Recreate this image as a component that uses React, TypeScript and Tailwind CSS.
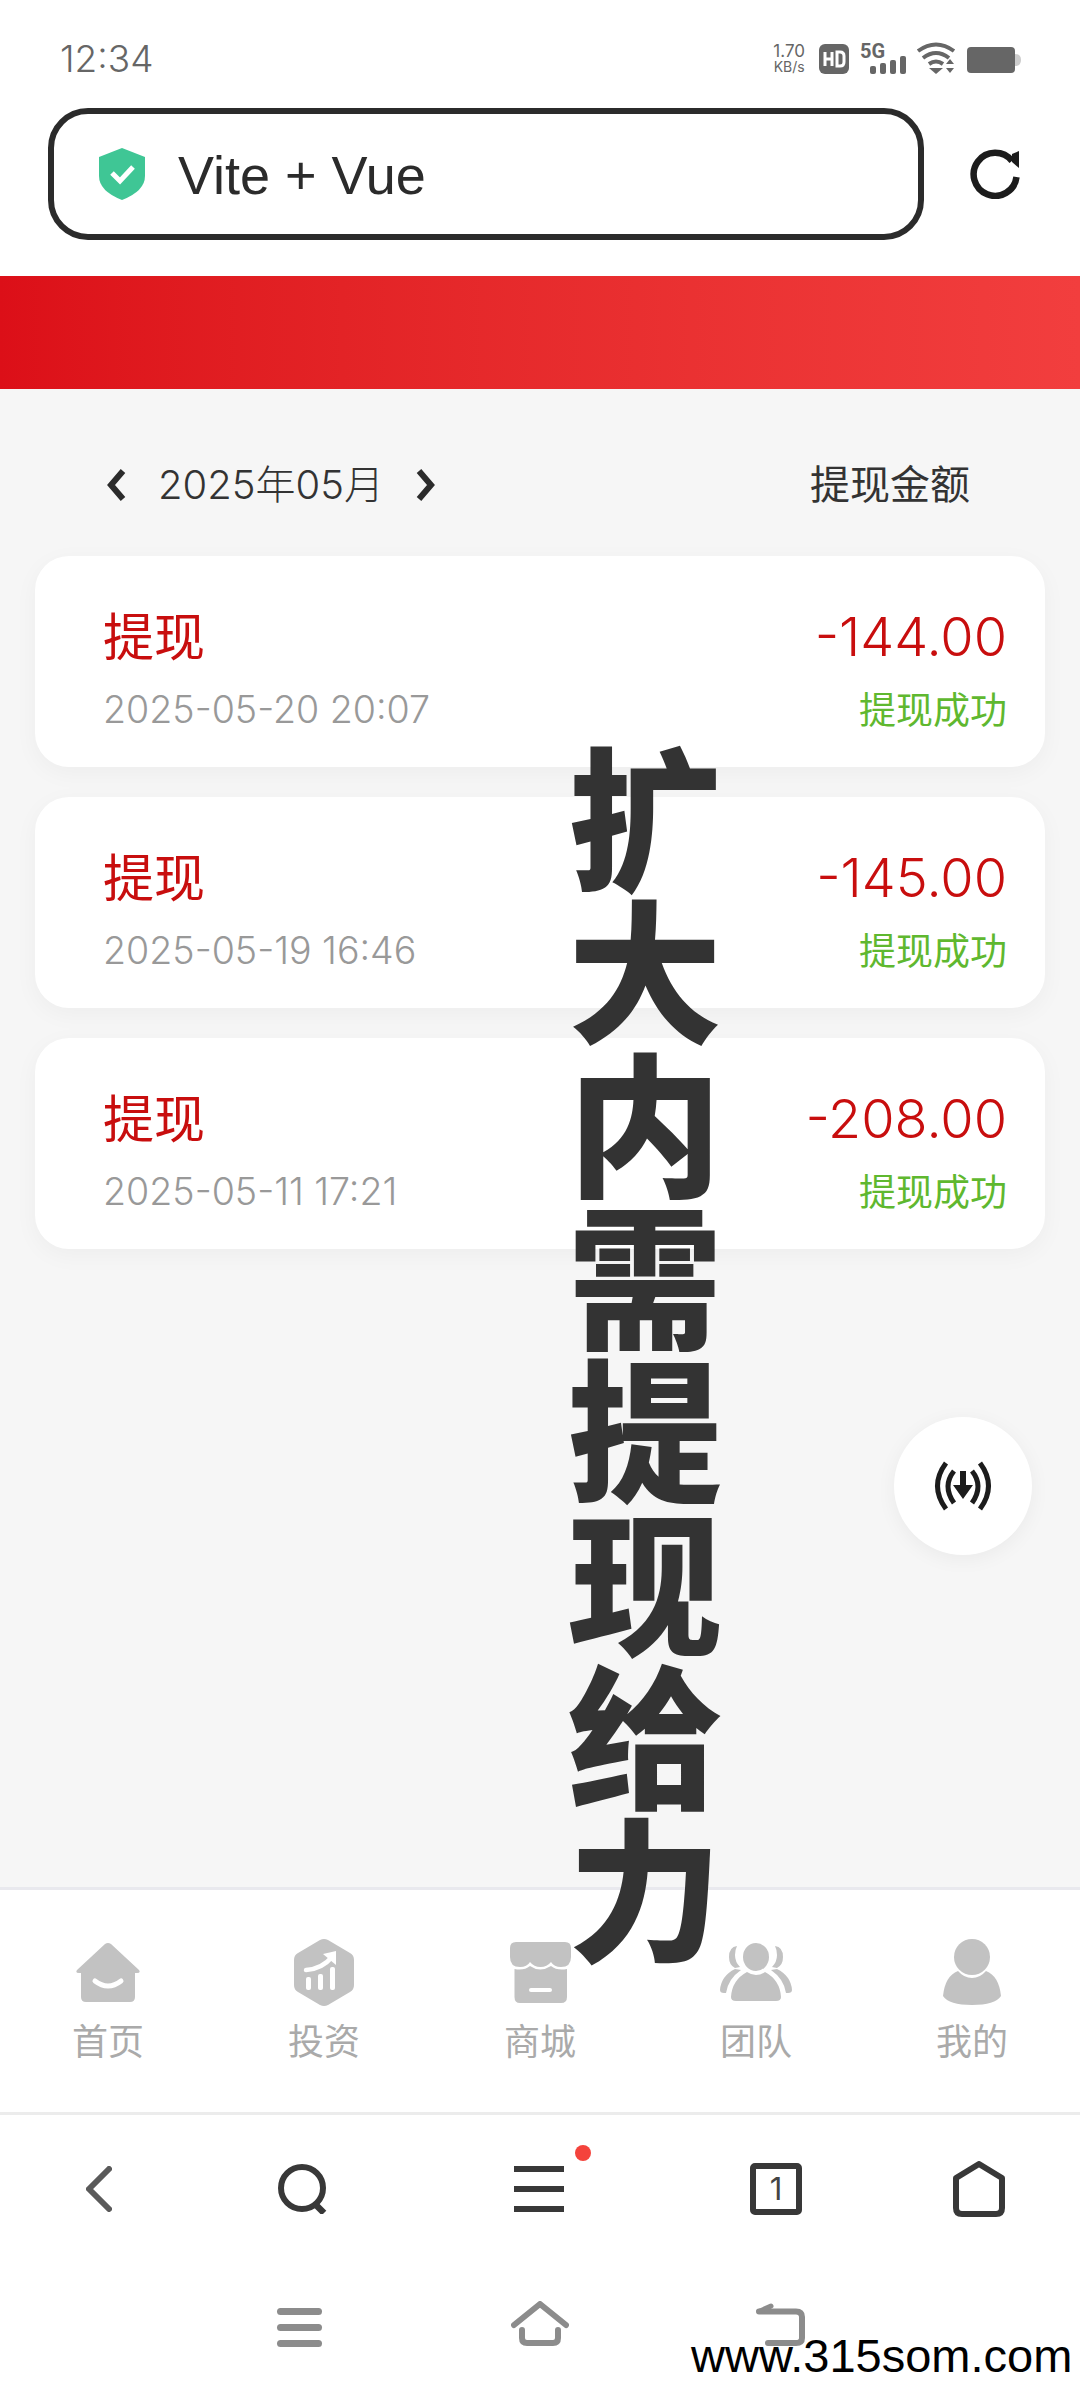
import React from 'react';

const FONT = "font-['Inter','Noto_Sans_CJK_SC',sans-serif]";

interface Record {
  time: string;
  amount: string;
}

const records: Record[] = [
  { time: '2025-05-20 20:07', amount: '-144.00' },
  { time: '2025-05-19 16:46', amount: '-145.00' },
  { time: '2025-05-11 17:21', amount: '-208.00' },
];

const HomeIcon = () => (
  <svg viewBox="0 0 64 59" className="w-[64px] h-[59px]" fill="#c2c2c2">
    <path d="M29 1 Q32 -1 35 1 L63 27 Q65 30 61 30 L59 30 L59 54 Q59 59 54 59 L10 59 Q5 59 5 54 L5 30 L3 30 Q-1 30 1 27 Z" />
    <path d="M19 38 Q32 48 45 38" stroke="#fff" strokeWidth="5" strokeLinecap="round" fill="none" />
  </svg>
);

const InvestIcon = () => (
  <svg viewBox="0 0 60 67" className="w-[60px] h-[67px]" fill="#c2c2c2">
    <path d="M26 1 Q30 -1 34 1 L56 14 Q60 16 60 21 L60 46 Q60 51 56 53 L34 66 Q30 68 26 66 L4 53 Q0 51 0 46 L0 21 Q0 16 4 14 Z" />
    <g fill="#fff">
      <rect x="12" y="38" width="5" height="13" rx="2" />
      <rect x="24" y="35" width="5" height="16" rx="2" />
      <rect x="36" y="28" width="5" height="23" rx="2" />
    </g>
    <path d="M12 31 Q28 30 38 18" stroke="#fff" strokeWidth="4.500" strokeLinecap="round" fill="none" />
    <path d="M29 15 L42 12 L42 26 Z" fill="#fff" />
  </svg>
);

const ShopIcon = () => (
  <svg viewBox="0 0 61 61" className="w-[61px] h-[61px]" fill="#c2c2c2">
    <path d="M6 0 H55 Q61 0 61 6 V15 Q61 25 51 25 Q44 25 41 20 Q37 25 30.500 25 Q24 25 20 20 Q17 25 10 25 Q0 25 0 15 V6 Q0 0 6 0 Z" />
    <path d="M4.500 27 Q14 29 20 24 Q30 31 41 24 Q47 29 57 27 V55 Q57 61 51 61 H10 Q4.500 61 4.500 55 Z" />
    <rect x="19" y="46" width="23" height="4" rx="2" fill="#fff" />
  </svg>
);

const TeamIcon = () => (
  <svg viewBox="0 0 72 58" className="w-[72px] h-[58px]" fill="#c2c2c2">
    <ellipse cx="36" cy="14" rx="13" ry="14" />
    <path d="M11 54 Q12 37 27 29 Q36 35 45 29 Q60 37 61 54 Q61 58 56 58 L16 58 Q11 58 11 54 Z" />
    <path d="M17 3 Q9 4 9 14 Q9 22 15 25 L20 24 Q15 19 15 12 Q15 7 17 3 Z" />
    <path d="M55 3 Q63 4 63 14 Q63 22 57 25 L52 24 Q57 19 57 12 Q57 7 55 3 Z" />
    <path d="M15 26 Q1 33 0 47 Q0 50 4 50 L6 50 Q8 36 21 27 Z" />
    <path d="M57 26 Q71 33 72 47 Q72 50 68 50 L66 50 Q64 36 51 27 Z" />
  </svg>
);

const MeIcon = () => (
  <svg viewBox="0 0 58 66" className="w-[58px] h-[66px]" fill="#c2c2c2">
    <circle cx="29" cy="18" r="18" />
    <path d="M15 32 Q21 39 29 39 Q37 39 43 32 Q56 37 58 57 Q52 66 29 66 Q6 66 0 57 Q2 37 15 32 Z" />
  </svg>
);

const tabs = [
  { label: '首页', icon: <HomeIcon /> },
  { label: '投资', icon: <InvestIcon /> },
  { label: '商城', icon: <ShopIcon /> },
  { label: '团队', icon: <TeamIcon /> },
  { label: '我的', icon: <MeIcon /> },
];

const StatusBar = () => (
  <div className="h-[108px] shrink-0 flex items-center justify-between pl-[60px] pr-[59px] pt-[8px]">
    <span className="text-[37px] leading-none text-[#666] font-light">12:34</span>
    <div className="flex items-center">
      <div className="flex flex-col items-center text-[#666] leading-none mr-[12px]">
        <span className="text-[17px] leading-[17px]">1.70</span>
        <span className="text-[14px] leading-[14px]">KB/s</span>
      </div>
      <svg viewBox="0 0 204 32" className="w-[204px] h-[32px] overflow-visible">
        <rect x="2" y="2" width="30" height="30" rx="6" fill="#666" />
        <path d="M8 10v14M8 17h7M15 10v14M20 10v14h3q4 0 4-4v-6q0-4-4-4z" stroke="#fff" strokeWidth="3" fill="none" />
        <text x="43" y="16" fontFamily="Roboto" fontWeight="700" fontSize="20" fill="#666">5G</text>
        <rect x="53" y="24" width="6" height="8" rx="2" fill="#666" />
        <rect x="63" y="21" width="6" height="11" rx="2" fill="#666" />
        <rect x="73" y="18" width="6" height="14" rx="2" fill="#666" />
        <rect x="83" y="14" width="6" height="18" rx="2" fill="#666" />
        <path d="M101 9 Q119 -4 137 9" stroke="#666" strokeWidth="4" fill="none" />
        <path d="M106 16 Q119 6 132 16" stroke="#666" strokeWidth="4" fill="none" />
        <path d="M112 22 Q119 17 126 22" stroke="#666" strokeWidth="4" fill="none" />
        <path d="M112 26h14l-7 6z" fill="#666" />
        <path d="M129 22h8l-4-5zM129 26h8l-4 5z" fill="#666" />
        <rect x="150" y="5" width="48" height="26" rx="4" fill="#666" />
        <path d="M198 12 Q204 12 204 18 Q204 24 198 24 Z" fill="#ccc" />
      </svg>
    </div>
  </div>
);

const AddressBar = () => (
  <div className="h-[168px] shrink-0 flex items-start pl-[48px] pr-[60px]">
    <div className="w-[876px] h-[132px] border-[6px] border-[#2b2b2b] rounded-[40px] flex items-center pl-[44px]">
      <svg viewBox="0 0 48 52" className="w-[48px] h-[52px]">
        <path d="M24 0 L47 9 L47 28 Q47 43 24 52 Q1 43 1 28 L1 9 Z" fill="#3fc695" />
        <path d="M14 25 L22 33 L35 19" stroke="#fff" strokeWidth="5" fill="none" />
      </svg>
      <span className="ml-[32px] mt-[2px] text-[54px] leading-none text-[#2b2b2b] font-['Liberation_Sans']">Vite + Vue</span>
    </div>
    <svg viewBox="0 0 50 50" className="ml-[46px] mt-[41px] w-[50px] h-[50px]">
      <path d="M46.500 28 A21.500 21.500 0 1 1 42 12" stroke="#1c1c1c" strokeWidth="6.500" fill="none" />
      <path d="M49 2 V19 L42 13 V5 Z" fill="#1c1c1c" />
    </svg>
  </div>
);

const MonthRow = () => (
  <div className="h-[167px] flex items-center pl-[106px] pr-[110px] pt-[24px] text-[40px] text-[#333]">
    <svg viewBox="0 0 22 34" className="w-[22px] h-[34px]">
      <path d="M17 3 L5 17 L17 31" stroke="#2b2b2b" strokeWidth="6" fill="none" />
    </svg>
    <span className="ml-[30px] leading-none font-light">2025年05月</span>
    <svg viewBox="0 0 22 34" className="ml-[30px] w-[22px] h-[34px]">
      <path d="M5 3 L17 17 L5 31" stroke="#2b2b2b" strokeWidth="6" fill="none" />
    </svg>
    <span className="ml-auto leading-none">提现金额</span>
  </div>
);

const RecordCard: React.FC<{ record: Record }> = ({ record }) => (
  <div className="h-[211px] rounded-[34px] bg-white shadow-[0_6px_24px_rgba(0,0,0,0.04)] pl-[68px] pr-[38px] pt-[52px]">
    <div className="flex items-center justify-between h-[58px]">
      <span className="text-[51px] leading-none text-[#c80e0e]">提现</span>
      <span className="text-[54px] leading-none text-[#c80e0e] font-light">{record.amount}</span>
    </div>
    <div className="flex items-center justify-between mt-[22px] h-[44px]">
      <span className="text-[37.6px] leading-none text-[#999] font-light">{record.time}</span>
      <span className="text-[37px] leading-none text-[#5fb82f]">提现成功</span>
    </div>
  </div>
);

const BrowserBar = () => (
  <div className="h-[150px] shrink-0 border-t-[3px] border-[#ececec] flex items-center pl-[86px] text-[#333]">
    <svg viewBox="0 0 26 46" className="w-[26px] h-[46px]">
      <path d="M23 3 L3 23 L23 43" stroke="#5a5a5a" strokeWidth="6" strokeLinecap="round" strokeLinejoin="round" fill="none" />
    </svg>
    <svg viewBox="0 0 50 50" className="ml-[166px] w-[50px] h-[50px]">
      <circle cx="24" cy="24" r="21" stroke="#383838" strokeWidth="6" fill="none" />
      <path d="M37 40 L46 49" stroke="#383838" strokeWidth="6.500" />
    </svg>
    <div className="relative ml-[186px]">
      <div className="w-[50px] flex flex-col gap-[14px]">
        <div className="h-[6px] bg-[#383838]" />
        <div className="h-[6px] bg-[#383838]" />
        <div className="h-[6px] bg-[#383838]" />
      </div>
      <div className="absolute -top-[21px] -right-[27px] w-[16px] h-[16px] rounded-full bg-[#f4433c]" />
    </div>
    <div className="ml-[186px] w-[52px] h-[52px] rounded-[5px] border-[6px] border-[#383838] flex items-center justify-center text-[31px] leading-none text-[#444]">
      1
    </div>
    <svg viewBox="0 0 52 56" className="ml-[151px] w-[52px] h-[56px]">
      <path d="M26 3 L49 17 L49 47 Q49 53 43 53 L9 53 Q3 53 3 47 L3 17 Z" stroke="#383838" strokeWidth="6" strokeLinejoin="round" fill="none" />
    </svg>
  </div>
);

const NavBar = () => (
  <div className="h-[126px] shrink-0 flex items-start pl-[277px] pt-[46px]">
    <div className="w-[45px] flex flex-col gap-[9px]">
      <div className="h-[7px] rounded-full bg-[#8c8c8c]" />
      <div className="h-[7px] rounded-full bg-[#8c8c8c]" />
      <div className="h-[7px] rounded-full bg-[#8c8c8c]" />
    </div>
    <svg viewBox="0 0 58 46" className="ml-[189px] -mt-[7px] w-[58px] h-[46px]">
      <path d="M3 24 L29 3 L55 24" stroke="#8c8c8c" strokeWidth="6" strokeLinecap="round" strokeLinejoin="round" fill="none" />
      <path d="M11 29 V37 Q11 42 16 42 H42 Q47 42 47 37 V29" stroke="#8c8c8c" strokeWidth="6" strokeLinecap="round" fill="none" />
    </svg>
    <svg viewBox="0 0 50 44" className="ml-[187px] -mt-[5px] w-[50px] h-[44px]">
      <path d="M3 8.500 H40 Q46 8.500 46 14 V35 Q46 40 40 40 H12" stroke="#8c8c8c" strokeWidth="6" strokeLinecap="round" fill="none" />
      <path d="M3 8.500 L15 3" stroke="#8c8c8c" strokeWidth="5" strokeLinecap="round" fill="none" />
    </svg>
  </div>
);

export default function App() {
  return (
    <div className={`relative w-[1080px] h-[2388px] overflow-hidden bg-white flex flex-col ${FONT}`}>
      <StatusBar />
      <AddressBar />

      <div className="h-[113px] bg-gradient-to-r from-[#dc0f18] to-[#f23e3e] shrink-0" />

      <main className="flex-1 min-h-0 bg-[#f6f6f6] relative">
        <MonthRow />
        <div className="px-[35px] flex flex-col gap-[30px]">
          {records.map((record) => (
            <RecordCard key={record.time} record={record} />
          ))}
        </div>
        <div className="absolute left-[894px] top-[1028px] w-[138px] h-[138px] rounded-full bg-white shadow-[0_4px_20px_rgba(0,0,0,0.05)] flex items-center justify-center">
          <svg viewBox="0 0 62 50" className="w-[62px] h-[50px]">
            <path d="M14 2 Q-3 25 14 48" stroke="#1c1c1c" strokeWidth="5" fill="none" />
            <path d="M48 2 Q65 25 48 48" stroke="#1c1c1c" strokeWidth="5" fill="none" />
            <path d="M22 10 Q10 25 22 42" stroke="#1c1c1c" strokeWidth="5" fill="none" />
            <path d="M40 10 Q52 25 40 42" stroke="#1c1c1c" strokeWidth="5" fill="none" />
            <path d="M28 10 h6 v14 h7 L31 38 L21 24 h7 Z" fill="#1c1c1c" />
          </svg>
        </div>
      </main>

      <nav className="h-[225px] shrink-0 border-t-[3px] border-[#e9e9ee] bg-white grid grid-cols-5 pt-[48px]">
        {tabs.map((tab) => (
          <div key={tab.label} className="flex flex-col items-center">
            <div className="h-[68px] flex items-center justify-center">{tab.icon}</div>
            <span className="mt-[18px] text-[36px] leading-none text-[#aaa]">{tab.label}</span>
          </div>
        ))}
      </nav>

      <BrowserBar />
      <NavBar />

      <div className="absolute left-[567px] top-[735px] w-[156px] text-[154px] leading-[153px] font-black text-[#333] text-center font-['Noto_Sans_CJK_SC',sans-serif]">
        扩大内需提现给力
      </div>
      <div className="absolute left-[691px] top-[2332px] text-[47px] leading-none text-black whitespace-nowrap font-['Liberation_Sans']">
        www.315som.com
      </div>
    </div>
  );
}
